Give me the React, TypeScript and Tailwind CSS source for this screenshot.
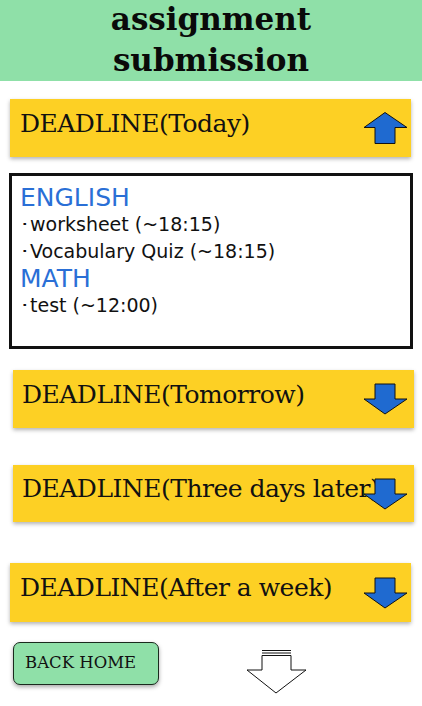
import React from "react";

const serif = { fontFamily: '"DejaVu Serif", "Liberation Serif", serif' };
const comic = { fontFamily: '"DejaVu Sans", "Liberation Sans", sans-serif' };

function UpArrow() {
  return (
    <svg width="45" height="33" viewBox="0 0 45 33" className="block">
      <polygon points="22,1 1,16 12,16 12,32 32,32 32,16 44,16" fill="#1f6ad0" stroke="#111" strokeWidth="1" strokeLinejoin="miter" />
    </svg>
  );
}

function DownArrow() {
  return (
    <svg width="45" height="32" viewBox="0 0 45 32" className="block">
      <polygon points="12,1 32,1 32,16 44,16 22,31 1,16 12,16" fill="#1f6ad0" stroke="#111" strokeWidth="1" />
    </svg>
  );
}

function Bar({ label, up, className, arrowRight }: { label: string; up?: boolean; className: string; arrowRight: string }) {
  return (
    <div className={"relative bg-[#fdd024] shadow-[0_2px_4px_rgba(0,0,0,0.3)] flex items-center " + className}>
      <span className="whitespace-nowrap text-[25px] leading-none tracking-[-0.5px] text-[#111] -mt-[10px]" style={serif}>
        {label}
      </span>
      <div className={"absolute top-1/2 -translate-y-1/2 " + arrowRight}>
        {up ? <UpArrow /> : <DownArrow />}
      </div>
    </div>
  );
}

export default function App() {
  return (
    <div className="w-[422px] h-[706px] bg-white flex flex-col overflow-hidden">
      <div className="h-[81px] bg-[#8fe0a8] flex flex-col items-center justify-center">
        <h1 className="text-[31px] font-bold leading-[41px] text-[#0a0a0a] text-center -mt-[1px]" style={serif}>
          assignment<br />submission
        </h1>
      </div>

      <Bar label="DEADLINE(Today)" up className="mt-[18px] ml-[10px] w-[401px] h-[58px] pl-[10px]" arrowRight="right-[3px]" />

      <div className="mt-[16px] ml-[9px] w-[404px] h-[176px] border-[3px] border-[#111] pl-[8px] pt-[8px]" style={comic}>
        <div className="text-[25px] leading-[27px] text-[#2a6fd6]">ENGLISH</div>
        <div className="text-[19px] leading-[27px] text-[#111]">･worksheet (~18:15)</div>
        <div className="text-[19px] leading-[27px] text-[#111]">･Vocabulary Quiz (~18:15)</div>
        <div className="text-[25px] leading-[27px] text-[#2a6fd6]">MATH</div>
        <div className="text-[19px] leading-[27px] text-[#111]">･test (~12:00)</div>
      </div>

      <Bar label="DEADLINE(Tomorrow)" className="mt-[21px] ml-[13px] w-[401px] h-[58px] pl-[9px]" arrowRight="right-[6px]" />
      <Bar label="DEADLINE(Three days later)" className="mt-[37px] ml-[13px] w-[401px] h-[57px] pl-[9px]" arrowRight="right-[6px]" />
      <Bar label="DEADLINE(After a week)" className="mt-[41px] ml-[10px] w-[401px] h-[59px] pl-[10px]" arrowRight="right-[3px]" />

      <div className="mt-[20px] flex items-start">
        <button className="ml-[13px] w-[146px] h-[43px] rounded-[7px] border border-[#1a2a1e] bg-[#8fe0a8] shadow-[0_2px_4px_rgba(0,0,0,0.35)] text-left pl-[11px] text-[16.5px] leading-none text-[#111]" style={serif}>
          BACK HOME
        </button>
        <svg width="61" height="46" viewBox="0 0 61 46" className="ml-[87px] mt-[7px] block">
          <line x1="16" y1="1.5" x2="45" y2="1.5" stroke="#111" strokeWidth="1" />
          <line x1="16" y1="4" x2="45" y2="4" stroke="#111" strokeWidth="1" />
          <polygon points="16,6.5 45,6.5 45,21 60,21 30,44 1,21 16,21" fill="#fff" stroke="#111" strokeWidth="1" />
        </svg>
      </div>
    </div>
  );
}
